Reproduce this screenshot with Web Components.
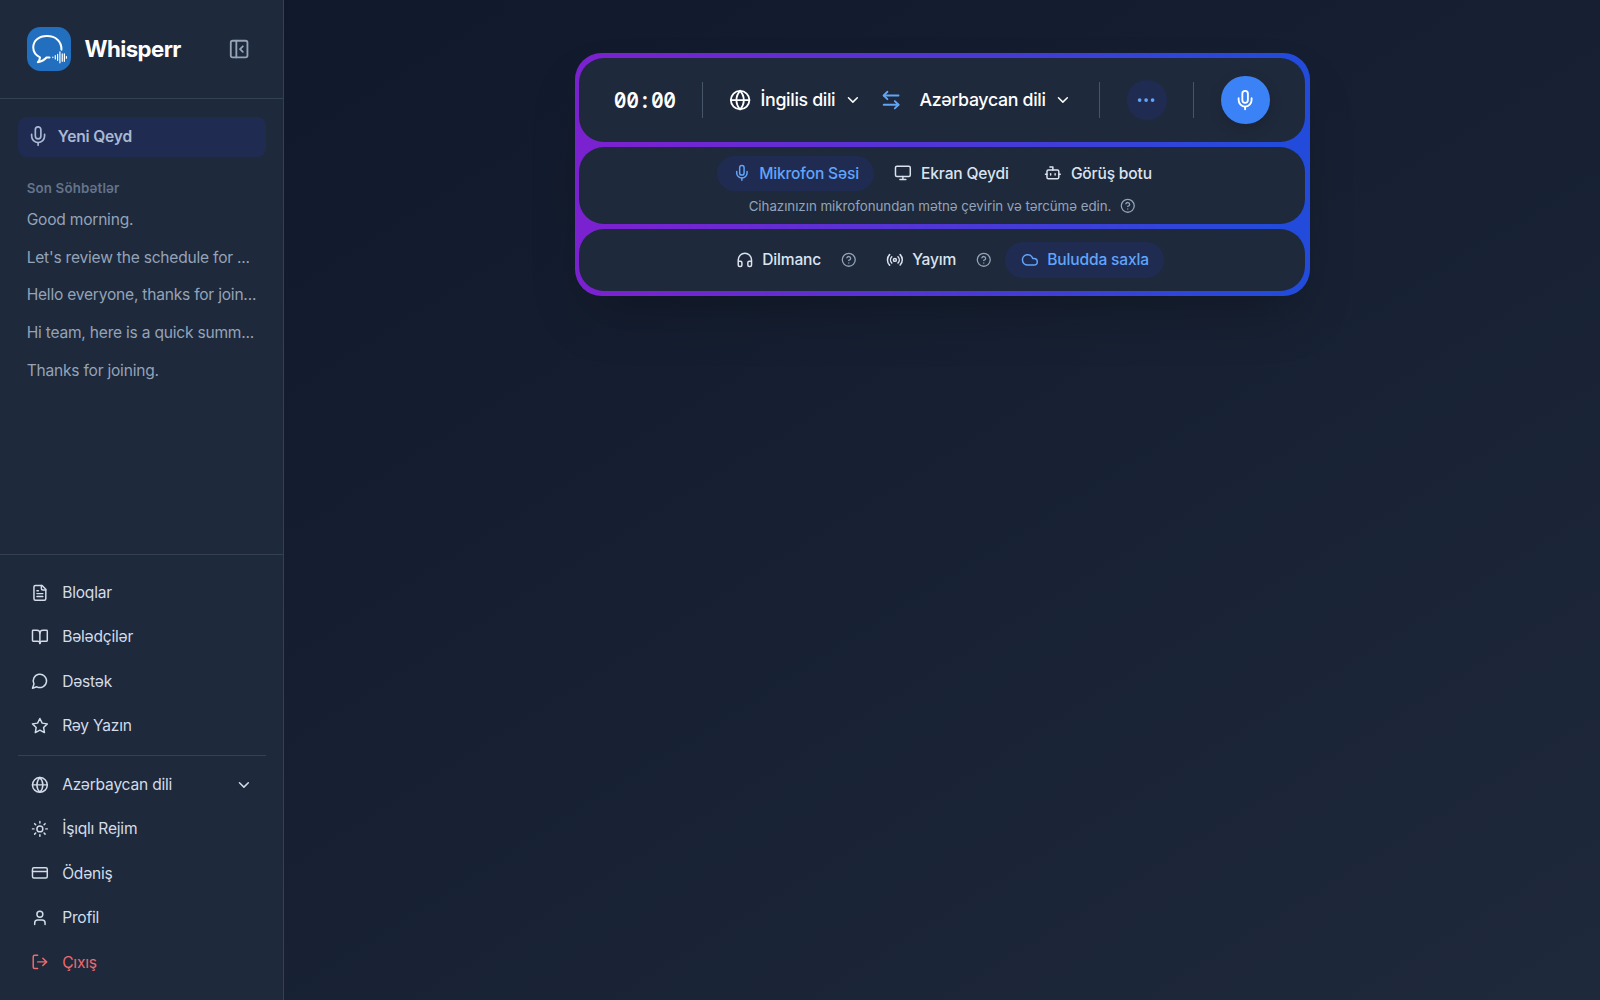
<!DOCTYPE html>
<html lang="az"><head><meta charset="utf-8"><title>Whisperr</title>
<style>
html{font-size:17.7778px}
body{margin:0;height:100vh;overflow:hidden;font-family:Inter,"Noto Sans",sans-serif;color:#cbd5e1;-webkit-font-smoothing:antialiased}
</style></head><body>
<wh-app></wh-app>
<script>
const ICONS={
mic:'<path d="M12 2a3 3 0 0 0-3 3v7a3 3 0 0 0 6 0V5a3 3 0 0 0-3-3Z"/><path d="M19 10v2a7 7 0 0 1-14 0v-2"/><path d="M12 19v3"/>',
panel:'<rect width="18" height="18" x="3" y="3" rx="2"/><path d="M9 3v18"/><path d="m16 15-3-3 3-3"/>',
file:'<path d="M15 2H6a2 2 0 0 0-2 2v16a2 2 0 0 0 2 2h12a2 2 0 0 0 2-2V7Z"/><path d="M14 2v4a2 2 0 0 0 2 2h4"/><path d="M10 9H8"/><path d="M16 13H8"/><path d="M16 17H8"/>',
book:'<path d="M12 7v14"/><path d="M3 18a1 1 0 0 1-1-1V4a1 1 0 0 1 1-1h5a4 4 0 0 1 4 4 4 4 0 0 1 4-4h5a1 1 0 0 1 1 1v13a1 1 0 0 1-1 1h-6a3 3 0 0 0-3 3 3 3 0 0 0-3-3z"/>',
chat:'<path d="M7.9 20A9 9 0 1 0 4 16.1L2 22Z"/>',
star:'<path d="M12 2l3.09 6.26L22 9.27l-5 4.87 1.18 6.88L12 17.77l-6.18 3.25L7 14.14 2 9.27l6.91-1.01z"/>',
globe:'<circle cx="12" cy="12" r="10"/><path d="M12 2a14.5 14.5 0 0 0 0 20 14.5 14.5 0 0 0 0-20"/><path d="M2 12h20"/>',
sun:'<circle cx="12" cy="12" r="4"/><path d="M12 2v2M12 20v2M4.93 4.93l1.41 1.41M17.66 17.66l1.41 1.41M2 12h2M20 12h2M6.34 17.66l-1.41 1.41M19.07 4.93l-1.41 1.41"/>',
card:'<rect width="20" height="14" x="2" y="5" rx="2"/><path d="M2 10h20"/>',
user:'<path d="M19 21v-2a4 4 0 0 0-4-4H9a4 4 0 0 0-4 4v2"/><circle cx="12" cy="7" r="4"/>',
logout:'<path d="M9 21H5a2 2 0 0 1-2-2V5a2 2 0 0 1 2-2h4"/><path d="m16 17 5-5-5-5"/><path d="M21 12H9"/>',
chevron:'<path d="m6 9 6 6 6-6"/>',
swap:'<path d="M8 3 4 7l4 4"/><path d="M4 7h16"/><path d="m16 21 4-4-4-4"/><path d="M20 17H4"/>',
dots:'<circle cx="12" cy="12" r="1"/><circle cx="19" cy="12" r="1"/><circle cx="5" cy="12" r="1"/>',
monitor:'<rect width="20" height="14" x="2" y="3" rx="2"/><path d="M8 21h8M12 17v4"/>',
bot:'<path d="M12 8V4H8"/><rect width="16" height="12" x="4" y="8" rx="2"/><path d="M2 14h2M20 14h2M15 13v2M9 13v2"/>',
help:'<circle cx="12" cy="12" r="10"/><path d="M9.09 9a3 3 0 0 1 5.83 1c0 2-3 3-3 3"/><path d="M12 17h.01"/>',
headphones:'<path d="M3 14h3a2 2 0 0 1 2 2v3a2 2 0 0 1-2 2H5a2 2 0 0 1-2-2v-7a9 9 0 0 1 18 0v7a2 2 0 0 1-2 2h-1a2 2 0 0 1-2-2v-3a2 2 0 0 1 2-2h3"/>',
radio:'<path d="M4.9 19.1C1 15.2 1 8.8 4.9 4.9"/><path d="M7.8 16.2c-2.3-2.3-2.3-6.1 0-8.5"/><circle cx="12" cy="12" r="2"/><path d="M16.2 7.8c2.3 2.3 2.3 6.1 0 8.5"/><path d="M19.1 4.9C23 8.8 23 15.1 19.1 19"/>',
cloud:'<path d="M17.5 19H9a7 7 0 1 1 6.71-9h1.79a4.5 4.5 0 1 1 0 9Z"/>'
};
function define(name,html,init){
  customElements.define(name,class extends HTMLElement{
    constructor(){super();this.attachShadow({mode:'open'}).innerHTML=html;}
    connectedCallback(){if(init)init(this,this.shadowRoot);}
  });
}
define('wh-icon','<style>:host{display:block;flex:none;width:var(--s,1rem);height:var(--s,1rem)}svg{display:block;width:100%;height:100%;overflow:visible}</style><svg viewBox="0 0 24 24" fill="none" stroke="currentColor" stroke-width="2" stroke-linecap="round" stroke-linejoin="round"></svg>',(el,r)=>{
  if(!el.hasAttribute('name'))return;
  if(el.hasAttribute('size'))el.style.setProperty('--s',el.getAttribute('size')/16+'rem');
  if(el.hasAttribute('weight'))r.querySelector('svg').setAttribute('stroke-width',el.getAttribute('weight'));
  r.querySelector('svg').innerHTML=ICONS[el.getAttribute('name')];
});
define('wh-logo',`<style>:host{display:block;width:2.5rem;height:2.5rem;border-radius:.75rem;overflow:hidden;background:#216fbe}svg{display:block;width:100%;height:100%}</style>
<svg viewBox="0 0 44 44" fill="none" stroke="#fff" stroke-linecap="round" stroke-linejoin="round"><path stroke-width="2" d="M34.100 22.400C34.300 13.900 28.300 9 19.800 9 11.500 9 6.200 13.700 6.200 20.300c0 4.500 2.500 7.700 6.700 9.700-.2 2.200-1 3.700-2.200 4.800 4-.6 6.800-2.400 8.600-4.600h3"/><path stroke-width="1.2" d="M25.600 29.700v.6M28 28.300v3.400M30.300 27v6M32.600 24.500v11M34.900 26.500v7.500M37 26.500v7.500M39 29.300v1.600"/></svg>`);
define('wh-nav-item',`<style>:host{display:flex;align-items:center;gap:.75rem;height:2.25rem;padding:0 .75rem;font-size:.875rem;letter-spacing:-.013em;color:#d3dce8}.t{flex:1;white-space:nowrap}:host([danger]){color:#f06a6e}</style><wh-icon></wh-icon><span class="t"><slot></slot></span><slot name="end"></slot>`,(el,r)=>{
  const i=r.querySelector('wh-icon');i.setAttribute('name',el.getAttribute('icon'));i.connectedCallback();
});
define('wh-recent','<style>:host{display:block;box-sizing:border-box;height:2rem;line-height:1.25rem;padding:.375rem .5rem;font-size:.875rem;letter-spacing:-.0135em;color:#94a3b8;white-space:nowrap}</style><slot></slot>');
define('wh-sidebar',`<style>
:host{display:flex;flex-direction:column;box-sizing:border-box;width:16rem;flex:none;background:#1e293b;border-right:1px solid #334155}
header{display:flex;align-items:center;height:5.5rem;padding:0 1.5rem;border-bottom:1px solid #334155}
h1{margin:0 0 0 .75rem;flex:1;font-size:1.25rem;font-weight:700;color:#fff;letter-spacing:-.025em}
header wh-icon{color:#94a3b8;margin-right:.375rem}
.list{flex:1;padding:1rem}
.new{display:flex;align-items:center;gap:.5rem;height:2.25rem;padding:0 .5rem;border-radius:.5rem;background:#202b52;color:#a9b9d2;font-size:.875rem;font-weight:600;letter-spacing:-.01em}
h2{margin:1.125rem 0 .19rem;padding:0 .5rem;line-height:1.25rem;font-size:.75rem;font-weight:600;letter-spacing:.012em;color:#64748b}
.rows{display:flex;flex-direction:column;gap:.125rem}
footer{display:flex;flex-direction:column;gap:.25rem;padding:1rem;border-top:1px solid #334155}
hr{width:100%;border:0;height:1px;background:#334155;margin:.25rem 0}
</style>
<header><wh-logo></wh-logo><h1>Whisperr</h1><wh-icon name="panel" size="20"></wh-icon></header>
<div class="list"><div class="new"><wh-icon name="mic" size="20" weight="1.8"></wh-icon>Yeni Qeyd</div><h2>Son Söhbətlər</h2>
<div class="rows"><wh-recent>Good morning.</wh-recent><wh-recent>Let's review the schedule for ...</wh-recent><wh-recent>Hello everyone, thanks for join...</wh-recent><wh-recent>Hi team, here is a quick summ...</wh-recent><wh-recent>Thanks for joining.</wh-recent></div></div>
<footer><wh-nav-item icon="file">Bloqlar</wh-nav-item><wh-nav-item icon="book">Bələdçilər</wh-nav-item><wh-nav-item icon="chat">Dəstək</wh-nav-item><wh-nav-item icon="star">Rəy Yazın</wh-nav-item><hr>
<wh-nav-item icon="globe">Azərbaycan dili<wh-icon slot="end" name="chevron"></wh-icon></wh-nav-item><wh-nav-item icon="sun">İşıqlı Rejim</wh-nav-item><wh-nav-item icon="card">Ödəniş</wh-nav-item><wh-nav-item icon="user">Profil</wh-nav-item><wh-nav-item icon="logout" danger>Çıxış</wh-nav-item></footer>`);
define('wh-chip',`<style>:host{display:flex;align-items:center;gap:.5rem;height:2rem;padding:0 .875rem;border-radius:1rem;font-size:.875rem;font-weight:500;letter-spacing:-.01em;color:#dbe3ee;white-space:nowrap}:host([active]){background:#202b52;color:#60a5fa}</style><slot></slot>`);
define('wh-recorder',`<style>
:host{display:flex;flex-direction:column;gap:.25rem;padding:.25rem;border-radius:1.5rem;background:linear-gradient(90deg,#7a22d0 5%,#234bdb 95%);box-shadow:0 1.5rem 3rem -.75rem rgba(0,0,0,.25)}
section{border-radius:1.4rem;background:#1e293b}
.top{display:flex;align-items:center;height:4.75rem;padding:0 2rem 0 1.95rem;gap:1.5rem;color:#fff}
.time{font:600 1.2rem/1 "Noto Sans Mono","DejaVu Sans Mono",monospace;width:3.45rem;letter-spacing:-.02em;white-space:nowrap}
.sep{width:1px;height:2rem;background:#475569}
.langs{display:flex;align-items:center;gap:1rem}
.lang{display:flex;align-items:center;gap:.5rem;font-size:1rem;font-weight:500;letter-spacing:-.019em;white-space:nowrap}
.swap{color:#60a5fa}
.more{display:grid;place-items:center;width:2.25rem;height:2.25rem;border-radius:50%;background:#202b52;color:#60a5fa}
.rec{display:grid;place-items:center;width:2.75rem;height:2.75rem;border-radius:50%;background:#3b82f6;box-shadow:0 .25rem .75rem rgba(0,0,0,.15)}
.mid{height:4.375rem;box-sizing:border-box;padding-top:.5rem}
.row{display:flex;justify-content:center;align-items:center;gap:.25rem}
.desc{display:flex;justify-content:center;align-items:center;gap:.5rem;height:1.25rem;margin-top:.23rem;font-size:.75rem;letter-spacing:-.003em;color:#94a3b8}
.bot{display:flex;height:3.5rem;justify-content:center;align-items:center;gap:.75rem}
.q{color:#94a3b8}
</style>
<section class="top"><div class="time">00:00</div><i class="sep"></i><div class="langs"><div class="lang"><wh-icon name="globe" size="20"></wh-icon><span>İngilis dili</span><wh-icon name="chevron"></wh-icon></div><wh-icon class="swap" name="swap" size="20"></wh-icon><div class="lang"><span>Azərbaycan dili</span><wh-icon name="chevron"></wh-icon></div></div><i class="sep"></i><div class="more"><wh-icon name="dots" size="20"></wh-icon></div><i class="sep"></i><div class="rec"><wh-icon name="mic" size="20"></wh-icon></div></section>
<section class="mid"><div class="row"><wh-chip active><wh-icon name="mic"></wh-icon>Mikrofon Səsi</wh-chip><wh-chip><wh-icon name="monitor"></wh-icon>Ekran Qeydi</wh-chip><wh-chip><wh-icon name="bot"></wh-icon>Görüş botu</wh-chip></div>
<div class="desc"><span>Cihazınızın mikrofonundan mətnə çevirin və tərcümə edin.</span><wh-icon name="help" size="14"></wh-icon></div></section>
<section class="bot"><div class="row"><wh-chip><wh-icon name="headphones"></wh-icon>Dilmanc</wh-chip><wh-icon class="q" name="help" size="14"></wh-icon></div><div class="row"><wh-chip><wh-icon name="radio"></wh-icon>Yayım</wh-chip><wh-icon class="q" name="help" size="14"></wh-icon></div><wh-chip active><wh-icon name="cloud"></wh-icon>Buludda saxla</wh-chip></section>`);
define('wh-app',`<style>:host{display:flex;height:100vh;background:linear-gradient(to bottom right,#0f172a,#1e293b)}main{flex:1;display:flex;justify-content:center;align-items:flex-start;padding-top:3rem}</style><wh-sidebar></wh-sidebar><main><wh-recorder></wh-recorder></main>`);
</script></body></html>
